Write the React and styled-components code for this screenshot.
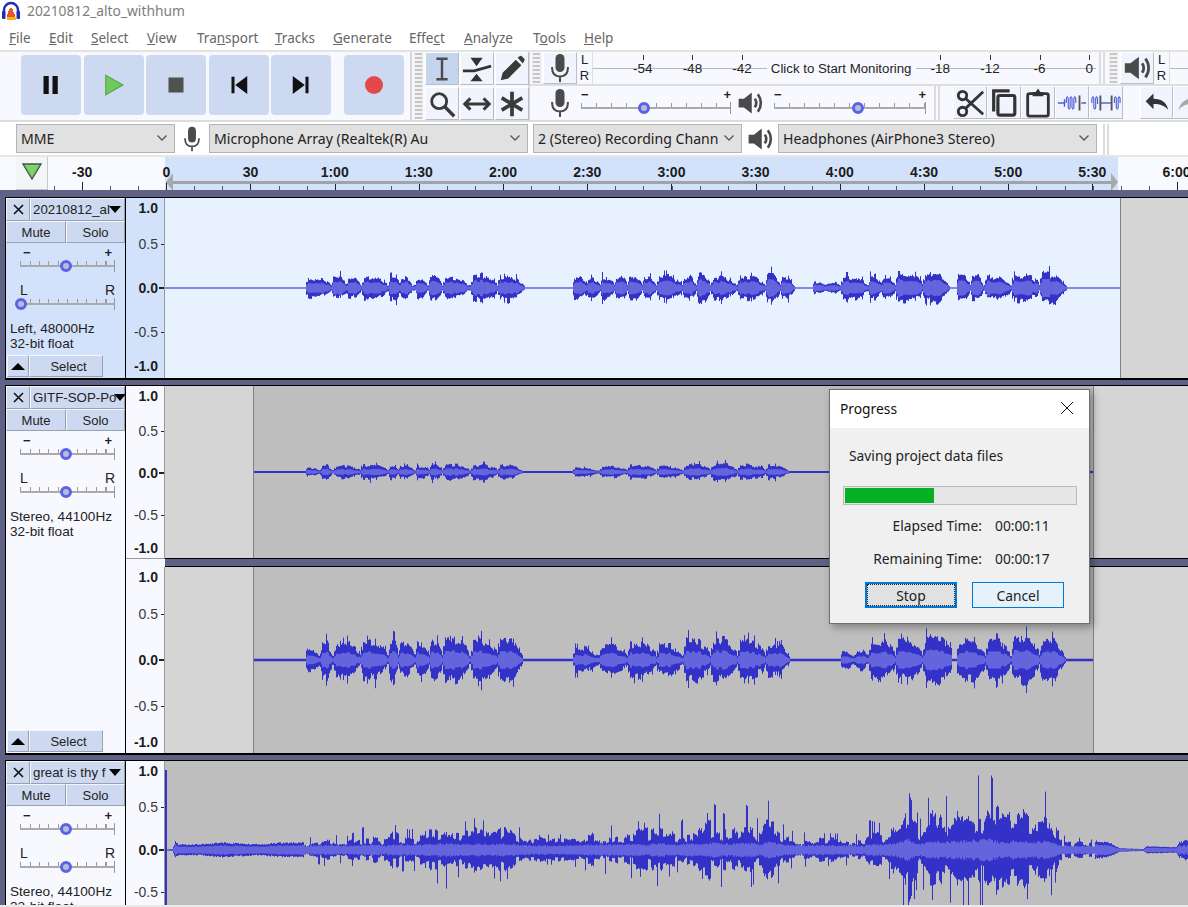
import React from 'react';
import styled, { createGlobalStyle } from 'styled-components';

const UI = '"Noto Sans", "Open Sans", sans-serif';
const ARIAL = '"Liberation Sans", Arial, sans-serif';

const GlobalStyle = createGlobalStyle`
  html, body { margin: 0; padding: 0; background: #fff; }
  * { box-sizing: border-box; }
`;

const Page = styled.div`
  position: relative;
  width: 1188px;
  height: 907px;
  overflow: hidden;
  display: flex;
  flex-direction: column;
  background: #fff;
  font-family: ${ARIAL};
`;

/* title + menu */
const TitleBar = styled.div`
  height: 25px;
  display: flex;
  align-items: center;
  gap: 7px;
  padding: 0 0 4px 2px;
  font: 13.8px ${UI};
  color: #7d7d7d;
`;
const MenuBar = styled.div`
  height: 25px;
  display: flex;
  align-items: center;
  padding-left: 9px;
  font: 13.5px ${UI};
  color: #666;
`;
const MenuItem = styled.span`
  flex: none;
  width: ${(p) => p.$w}px;
`;

/* toolbars */
const Dock = styled.div`
  height: 72px;
  display: flex;
  background: #f8f9fe;
  border-top: 2px solid #e3e3e3;
  border-bottom: 2px solid #dcdcdc;
`;
const Grip = styled.div`
  flex: none;
  width: 9px;
  margin: 1px ${(p) => p.$mr ?? 2}px 1px ${(p) => p.$ml ?? 3}px;
  background: repeating-linear-gradient(0deg, #c6c6c6 0 2px, #f4f4f4 2px 4px);
  border-left: 1px solid #ebebeb;
  border-right: 1px solid #ebebeb;
`;
const TransportBar = styled.div`
  flex: none;
  width: 412px;
  display: flex;
  align-items: center;
  padding-bottom: 2px;
  border-right: 2px solid #d6d6d6;
`;
const TransportBtn = styled.div`
  flex: none;
  width: 60px;
  height: 60px;
  margin-left: ${(p) => p.$ml ?? 2.6}px;
  background: #cdd9f0;
  border-radius: 4px;
  display: flex;
  align-items: center;
  justify-content: center;
`;
const ToolsBar = styled.div`
  flex: none;
  width: 118px;
  display: flex;
  border-right: 2px solid #d6d6d6;
`;
const ToolGrid = styled.div`
  display: grid;
  grid-template-columns: repeat(3, 34px);
  grid-auto-rows: 34px;
  margin-left: 1px;
  gap: 1px 1px;
`;
const ToolBtn = styled.div`
  flex: none;
  width: ${(p) => p.$w ?? 34}px;
  height: ${(p) => p.$h ?? 33}px;
  background: ${(p) => (p.$on ? '#c6d5ee' : '#f1f4fc')};
  border-right: 1px solid #b9bdc9;
  border-bottom: 1px solid #b9bdc9;
  border-top: 1px solid #fff;
  border-left: 1px solid #fff;
  display: flex;
  align-items: center;
  justify-content: center;
`;
const RightStack = styled.div`
  flex: 1;
  min-width: 0;
  display: flex;
  flex-direction: column;
`;
const MeterRow = styled.div`
  height: 34px;
  display: flex;
  border-bottom: 2px solid #dedede;
`;
const MixRow = styled.div`
  flex: 1;
  display: flex;
  align-items: flex-start;
`;
const LR = styled.div`
  flex: none;
  width: 13px;
  margin-left: 1px;
  display: flex;
  flex-direction: column;
  justify-content: space-around;
  align-items: center;
  font: 13px ${ARIAL};
  line-height: 16px;
  color: #222;
`;
const Meter = styled.div`
  flex: none;
  width: 504px;
  height: 32px;
  margin-left: 1px;
  padding-left: 25px;
  display: grid;
  grid-template-columns: repeat(10, 49.6px);
  align-items: center;
  background: linear-gradient(#b8b8b8, #b8b8b8) 0 16px / 100% 1px no-repeat;
  border-left: 1px solid #dedede;
  font: 13.5px ${ARIAL};
  color: #222;
`;
const MeterCell = styled.div`
  position: relative;
  height: 100%;
  display: flex;
  align-items: center;
  justify-content: center;
  white-space: nowrap;
  padding-top: 1px;
  &::before {
    content: '';
    position: absolute;
    left: 50%;
    top: 3px;
    width: 1px;
    height: 5px;
    background: #333;
  }
`;
const MonitorHint = styled.div`
  grid-column: span 3;
  position: relative;
  height: 100%;
  display: flex;
  align-items: center;
  justify-content: center;
  white-space: nowrap;
  font-size: 13.25px;
  padding-top: 1px;
  &::before {
    content: '';
    position: absolute;
    inset: 9px 0 7px;
    background: #f8f9fe;
    z-index: 0;
  }
  & > span { position: relative; }
`;
const DoubleRule = styled.div`
  flex: none;
  width: 6px;
  margin: ${(p) => p.$m ?? '0 3px'};
  align-self: stretch;
  border-left: 2px solid #dcdcdc;
  border-right: 2px solid #dcdcdc;
`;
const MeterStub = styled.div`
  flex: 1;
  margin-left: 1px;
  background: linear-gradient(#b8b8b8, #b8b8b8) 0 16px / 100% 1px no-repeat;
  border-left: 1px solid #dedede;
`;
const IconSlot = styled.div`
  flex: none;
  width: ${(p) => p.$w}px;
  height: ${(p) => p.$h ?? 33}px;
  margin-left: ${(p) => p.$ml ?? 0}px;
  display: flex;
  align-items: center;
  justify-content: center;
`;

/* sliders, both toolbar and track panel */
const SliderBlock = styled.div`
  flex: none;
  width: ${(p) => p.$w}px;
  margin: ${(p) => p.$m};
`;
const SliderEnds = styled.div`
  height: 15px;
  display: flex;
  justify-content: space-between;
  align-items: center;
  padding: 0 ${(p) => p.$pad ?? 2}px 1px;
  font: ${(p) => (p.$big ? '14px' : '13px')} ${ARIAL};
  font-weight: ${(p) => (p.$big ? 400 : 700)};
  color: #222;
`;
const Rail = styled.div`
  position: relative;
  height: 12px;
  background:
    linear-gradient(#aaa, #aaa) 0 5px / 100% 2px no-repeat,
    repeating-linear-gradient(90deg, #9a9a9a 0 1px, transparent 1px ${(p) => p.$step}px) 0 1px / 100% 4px no-repeat;
  border-right: 1px solid #999;
`;
const Thumb = styled.div`
  position: absolute;
  top: 0;
  left: ${(p) => p.$at}px;
  width: 12px;
  height: 12px;
  margin-left: -6px;
  border-radius: 50%;
  background: #b8bcd6;
  border: 3px solid #5a62e6;
`;

/* device row */
const DeviceRow = styled.div`
  height: 35px;
  flex: none;
  display: flex;
  align-items: flex-start;
  padding-top: 2px;
  background: #fff;
  border-bottom: 2px solid #e6e6e6;
`;
const DeviceSelect = styled.div`
  flex: none;
  width: ${(p) => p.$w}px;
  height: 29px;
  margin-left: ${(p) => p.$ml ?? 0}px;
  display: flex;
  align-items: center;
  justify-content: space-between;
  padding: 0 6px 1px 4px;
  background: #e1e1e1;
  border: 1px solid #b4b4b4;
  font: 14.1px ${UI};
  color: #222;
  white-space: nowrap;
  overflow: hidden;
`;

/* timeline */
const TimelineRow = styled.div`
  height: 33px;
  flex: none;
  display: flex;
  padding-left: 16px;
  background: #f9faff;
`;
const PinBtn = styled.div`
  flex: none;
  width: 32px;
  display: flex;
  align-items: center;
  justify-content: center;
  padding-bottom: 4px;
  background: #f4f5fb;
  border-right: 1px solid #c8c8c8;
  border-bottom: 1px solid #c8c8c8;
`;
const Rule = styled.div`
  position: relative;
  flex: 1;
  overflow: hidden;
  background:
    repeating-linear-gradient(90deg, #222 0 1px, transparent 1px 84.2px) 33.8px 100% / 100% 8px no-repeat,
    repeating-linear-gradient(90deg, #555 0 1px, transparent 1px 28.07px) 5.7px 100% / 100% 4px no-repeat,
    linear-gradient(#d3e2fb, #d3e2fb) 117px 0 / 953px 100% no-repeat;
`;
const RuleLabels = styled.div`
  display: grid;
  grid-template-columns: repeat(14, 84.2px);
  margin-left: -8px;
  padding-top: 7px;
  font: 700 14px ${ARIAL};
  color: #1c1c1c;
  text-align: center;
`;
const PlayRegion = styled.div`
  position: absolute;
  left: 122px;
  top: 24px;
  width: 942px;
  height: 3px;
  background: #a3a3a3;
`;
const RegionEnd = styled.div`
  position: absolute;
  top: 16px;
  left: ${(p) => p.$x}px;
  width: 0;
  height: 0;
  border-top: 9px solid transparent;
  border-bottom: 9px solid transparent;
  ${(p) => (p.$flip ? 'border-left: 7px solid #a9a9a9;' : 'border-right: 7px solid #a9a9a9;')}
`;

/* tracks */
const TrackArea = styled.div`
  flex: 1;
  min-height: 0;
  padding: 7px 0 0 5px;
  background: #5f6285;
  overflow: hidden;
`;
const Track = styled.div`
  height: ${(p) => p.$h + 3}px;
  flex: none;
  display: flex;
  margin-bottom: 5px;
  background: #000;
  border-top: 1px solid #000;
  border-bottom: 2px solid #000;
  border-left: 1px solid #000;
  overflow: hidden;
`;
const Panel = styled.div`
  flex: none;
  width: 120px;
  display: flex;
  flex-direction: column;
  background: ${(p) => (p.$sel ? '#d3e2fb' : '#f8f9ff')};
  border-right: 1px solid #000;
`;
const PanelRow = styled.div`
  flex: none;
  display: flex;
  height: ${(p) => p.$h}px;
`;
const PanelBtn = styled.div`
  flex: ${(p) => (p.$w ? 'none' : 1)};
  width: ${(p) => (p.$w ? `${p.$w}px` : 'auto')};
  padding-left: ${(p) => p.$pl ?? 0}px;
  display: flex;
  align-items: center;
  justify-content: center;
  min-width: 0;
  background: #cdd9f0;
  border-top: 1px solid #f4f6fb;
  border-left: 1px solid #f4f6fb;
  border-right: 1px solid #9aa0ad;
  border-bottom: 1px solid #9aa0ad;
  font: 13px ${ARIAL};
  color: #222;
`;
const NameBtn = styled(PanelBtn)`
  justify-content: space-between;
  padding: 0 3px 0 2px;
  white-space: nowrap;
  font-size: 13.3px;
`;
const NameText = styled.span`
  display: block;
`;
const DownArrow = styled.span`
  flex: none;
  width: 0;
  height: 0;
  margin-left: -2px;
  border-left: 6px solid transparent;
  border-right: 6px solid transparent;
  border-top: 7px solid #000;
`;
const UpArrow = styled.span`
  width: 0;
  height: 0;
  border-left: 7px solid transparent;
  border-right: 7px solid transparent;
  border-bottom: 7px solid #000;
`;
const Info = styled.div`
  flex: none;
  margin: 11px 0 0 4px;
  font: 13.6px/15px ${ARIAL};
  color: #222;
`;
const PanelFoot = styled.div`
  margin-top: auto;
  margin-bottom: 1px;
  flex: none;
  height: 22px;
  display: flex;
  padding-left: 1px;
`;
const ChannelStack = styled.div`
  flex: 1;
  min-width: 0;
  display: flex;
  flex-direction: column;
`;
const Channel = styled.div`
  flex: 1 1 auto;
  min-width: 0;
  height: ${(p) => p.$h}px;
  display: flex;
`;
const Scale = styled.div`
  flex: none;
  width: 39px;
  height: 100%;
  overflow: hidden;
  background: ${(p) => (p.$sel ? '#d3e2fb' : '#f8f9ff')};
  border-right: 1px solid #999;
`;
const ScaleRow = styled.div`
  flex: none;
  height: ${(p) => p.$h}px;
  display: flex;
  align-items: center;
  justify-content: flex-end;
  gap: 3px;
  padding-right: ${(p) => (p.$tick ? 0 : 6)}px;
  font: ${(p) => (p.$bold ? 700 : 400)} 14px ${ARIAL};
  color: ${(p) => (p.$bold ? '#1c1c1c' : '#3a3a3a')};
`;
const Tick = styled.span`
  width: ${(p) => (p.$zero ? 5 : 3)}px;
  margin-left: ${(p) => (p.$zero ? -2 : 0)}px;
  height: ${(p) => (p.$zero ? 2 : 1)}px;
  background: #222;
`;
const ChannelGap = styled.div`
  flex: none;
  height: 9px;
  display: flex;
`;
const GapScale = styled.div`
  flex: none;
  width: 39px;
  background: #f8f9ff;
  border-top: 1px solid #999;
`;
const GapBand = styled.div`
  flex: 1;
  background: #5f6285;
  border-top: 1px solid #000;
  border-bottom: 1px solid #000;
`;
const WaveArea = styled.div`
  flex: 1;
  min-width: 0;
  display: flex;
  background: #d5d5d5;
`;
const Clip = styled.div`
  flex: none;
  width: ${(p) => p.$w}px;
  margin-left: ${(p) => p.$ml ?? 0}px;
  background: ${(p) => (p.$sel ? '#e8f1fe' : '#bebebe')};
  ${(p) => p.$edge && 'box-shadow: -1px 0 0 #808080, 1px 0 0 #808080;'}
  ${(p) => p.$right && 'box-shadow: 1px 0 0 #808080;'}
  & > svg { display: block; }
`;
const FootStrip = styled.div`
  position: absolute;
  left: 0;
  right: 0;
  bottom: 0;
  height: 2px;
  background: #e9e9e9;
`;

/* progress dialog */
const Dialog = styled.div`
  position: absolute;
  left: 829px;
  top: 389px;
  width: 261px;
  height: 235px;
  display: flex;
  flex-direction: column;
  background: #f0f0f0;
  border: 1px solid #6f6f6f;
  box-shadow: 3px 3px 8px rgba(0, 0, 0, 0.35);
  font: 13.8px ${UI};
  color: #222;
`;
const DialogTitle = styled.div`
  flex: none;
  height: 38px;
  display: flex;
  align-items: center;
  justify-content: space-between;
  padding: 0 15px 2px 10px;
  background: #fff;
  font-size: 13.8px;
  color: #111;
`;
const DialogMessage = styled.div`
  margin: 18px 0 0 19px;
  line-height: 20px;
  height: 20px;
`;
const BarTrack = styled.div`
  height: 19px;
  margin: 20px 12px 0 13px;
  padding: 1px;
  background: #e6e6e6;
  border: 1px solid #bcbcbc;
`;
const BarFill = styled.div`
  height: 100%;
  background: #06b025;
`;
const TimeGrid = styled.div`
  display: grid;
  grid-template-columns: 152px 1fr;
  column-gap: 13px;
  grid-auto-rows: 33px;
  align-items: center;
  margin-top: 4px;
`;
const TimeLabel = styled.div`
  text-align: right;
`;
const ButtonRow = styled.div`
  display: flex;
  gap: 15px;
  margin: 7px 0 0 35px;
`;
const DialogBtn = styled.div`
  position: relative;
  width: 92px;
  height: 26px;
  display: flex;
  align-items: center;
  justify-content: center;
  background: ${(p) => (p.$focus ? '#e1e1e1' : '#e5f1fb')};
  border: ${(p) => (p.$focus ? '2px solid #0078d7' : '1px solid #0078d7')};
  outline: ${(p) => (p.$focus ? '1px dotted #222' : 'none')};
  outline-offset: -3px;
`;

/* icons */
const Ic = ({ size = 24, vb = 32, children }) => (
  <svg width={size} height={size} viewBox={`0 0 ${vb} ${vb}`} fill="none">{children}</svg>
);
const Logo = () => (
  <svg width="18" height="20" viewBox="0 0 18 20">
    <path d="M2 13V9a7 7 0 0 1 14 0v4" fill="none" stroke="#1b2fb8" strokeWidth="2.4" />
    <rect x="0" y="10" width="3.5" height="8" rx="1" fill="#1b2fb8" />
    <rect x="14.5" y="10" width="3.5" height="8" rx="1" fill="#1b2fb8" />
    <path d="M4 16h1V13h1v-3h1v-2h1v-1h2v1h1v3h1v2h1v3H4z" fill="#e8552a" />
    <path d="M5 19h9v-3H5z" fill="#f3b21f" />
  </svg>
);
const Mic = ({ c = '#4a4a4a', size = 32 }) => (
  <Ic size={size}>
    <rect x="11.5" y="2" width="9" height="18" rx="4.5" fill={c} />
    <path d="M8 15c0 6 3 9.5 8 9.5s8-3.5 8-9.5M16 24v6" stroke={c} strokeWidth="2" />
  </Ic>
);
const Speaker = ({ size = 30 }) => (
  <Ic size={size}>
    <path d="M3 11h6l9-7v24l-9-7H3z" fill="#4a4a4a" />
    <path d="M21.500 11c2 3 2 7 0 10M25 6c4.500 6 4.500 14 0 20" stroke="#4a4a4a" strokeWidth="3" />
  </Ic>
);
const Chevron = () => (
  <svg width="12" height="8" viewBox="0 0 12 8" fill="none">
    <path d="M1.500 1.500L6 6l4.500-4.500" stroke="#555" strokeWidth="1.300" />
  </svg>
);

const tools = [
  <path key="i" d="M10 5h12M10 27h12M16 5v22" stroke="#4c4c4c" strokeWidth="2.600" />,
  <g key="e">
    <path d="M1 18h12l18-5" stroke="#333" strokeWidth="3" />
    <path d="M9 4h13l-6.500 9zM9 29h13l-6.500-8z" fill="#333" />
  </g>,
  <path key="p" d="M4 28l2-8L20 6l6 6-14 14zM22 4l2-1.500a2 2 0 0 1 2.500 0l2.500 2.500a2 2 0 0 1 0 2.500L27.500 10z" fill="#3a3a3a" />,
  <g key="z" stroke="#3a3a3a">
    <circle cx="13" cy="13" r="8" strokeWidth="3" />
    <path d="M19 19l10 10" strokeWidth="3.600" />
  </g>,
  <path key="t" d="M3 16h26M9 10l-6 6 6 6M23 10l6 6-6 6" stroke="#3a3a3a" strokeWidth="3.200" />,
  <path key="m" d="M16 3v26M5 9.500l22 13M5 22.500l22-13" stroke="#3a3a3a" strokeWidth="4" />,
];
const editIcons = [
  <g key="c" stroke="#333" strokeWidth="3">
    <circle cx="8" cy="8" r="4.500" />
    <circle cx="8" cy="25" r="4.500" />
    <path d="M11 11l19 17M11 22L30 4" />
  </g>,
  <g key="k" stroke="#333" strokeWidth="3.400">
    <path d="M5 25V3h17" />
    <rect x="9.500" y="8" width="18" height="21" rx="2" />
  </g>,
  <g key="v" stroke="#333" strokeWidth="3">
    <rect x="5" y="6" width="22" height="24" rx="2" />
    <path d="M11 8V5h3l2-3 2 3h3v3z" fill="#333" strokeWidth="1.500" />
  </g>,
  <g key="tr" fill="none">
    <path d="M1 16h7M26 16h5M8 12v8" stroke="#4d5cd6" strokeWidth="1.500" />
    <path d="M10 16v-5q1-3 2 0v10q1 3 2 0V11q1-3 2 0v10q1 3 2 0V11q1-3 2 0v5" stroke="#4d5cd6" strokeWidth="1.200" />
    <path d="M24 8v16" stroke="#555" strokeWidth="2" />
  </g>,
  <g key="s" fill="none">
    <path d="M1 16v-5q1-3 2 0v10q1 3 2 0V11q1-3 2 0v6M25 16v-5q1-3 2 0v10q1 3 2 0V11q1-3 2 0v5" stroke="#4d5cd6" strokeWidth="1.200" />
    <path d="M10 16h12" stroke="#4d5cd6" strokeWidth="1.500" />
    <path d="M10 8v16M22 8v16" stroke="#555" strokeWidth="2" />
  </g>,
];

/* wave drawing */
const rng = (seed) => {
  let s = seed;
  return () => {
    s = (s * 16807) % 2147483647;
    return s / 2147483647;
  };
};
const noteEnv = (notes, x) => {
  const i = notes.findIndex((m) => x >= m[0] && x < m[1]);
  if (i < 0) {
    // short gaps inside a phrase keep a little body
    const prev = notes.filter((m) => m[1] <= x).pop();
    const next = notes.find((m) => m[0] > x);
    return prev && next && next[0] - prev[1] < 5 ? 0.25 : 0;
  }
  const n = notes[i];
  const t = (x - n[0]) / (n[1] - n[0]);
  const next = notes[i + 1];
  const last = !next || next[0] - n[1] > 6;
  if (t < 0.05) return n[2] * 0.62;
  if (t < 0.55) return n[2];
  const fall = (t - 0.55) / 0.45;
  return n[2] * (1 - fall * (last ? 0.9 : 0.6));
};
const lerpEnv = (keys, x) => {
  for (let i = 1; i < keys.length; i++) {
    if (x <= keys[i][0]) {
      const [a, va] = keys[i - 1];
      const [b, vb] = keys[i];
      return va + ((vb - va) * (x - a)) / (b - a || 1);
    }
  }
  return keys[keys.length - 1][1];
};

const soloNotes = [
  [306, 330, 0.85], [332, 347, 0.9], [347, 361, 0.85], [362, 387, 1], [389, 400, 1.05], [400, 412, 0.95],
  [416, 427, 0.9], [429, 442, 1], [443, 467, 0.95], [471, 497, 1.15], [498, 525, 1],
  [573, 587, 0.95], [587, 600, 0.8], [601, 614, 0.95], [615, 627, 1.05], [628, 642, 0.95], [643, 656, 0.9],
  [657, 682, 1], [683, 696, 0.95], [697, 710, 1.2], [711, 736, 0.95], [738, 765, 1], [766, 780, 1.2], [781, 795, 0.9],
  [813, 826, 0.5], [827, 840, 0.45], [841, 867, 0.95], [869, 882, 0.9], [882, 895, 0.85], [896, 922, 1.35],
  [923, 950, 1.25], [957, 970, 1.05], [971, 983, 1.05], [985, 1010, 1.05], [1012, 1039, 1.2], [1040, 1067, 1.25],
];
const choirNotes = [
  [306, 320, 0.55], [321, 332, 0.9], [334, 360, 0.85], [361, 387, 0.95], [389, 398, 1], [399, 414, 0.8],
  [416, 429, 0.85], [430, 442, 0.95], [443, 469, 1.1], [471, 497, 1], [498, 523, 1],
  [573, 597, 0.6], [600, 627, 0.75], [628, 656, 0.9], [657, 682, 0.75], [684, 710, 1], [711, 737, 1.1],
  [738, 765, 0.95], [766, 790, 0.85],
  [841, 854, 0.45], [856, 867, 0.55], [869, 895, 1], [896, 922, 1], [923, 952, 1.15], [957, 985, 1],
  [986, 1010, 1.05], [1012, 1039, 1.2], [1040, 1066, 1],
];
const hymnKeys = [
  [165, 0], [172, 1], [175, 9], [178, 6], [200, 6], [222, 8], [240, 7], [260, 6], [280, 8], [300, 8], [308, 12], [325, 17],
  [345, 13], [365, 24], [385, 15], [392, 26], [410, 20], [432, 32], [448, 42], [460, 26], [472, 32], [490, 28], [502, 34], [520, 22],
  [532, 15], [570, 16], [598, 26], [615, 24], [632, 30], [650, 26], [657, 38], [676, 22], [683, 32], [700, 28], [714, 46], [730, 30],
  [742, 50], [760, 28], [769, 52], [786, 20], [809, 17], [856, 16], [864, 10], [868, 30], [883, 26], [896, 36], [908, 80], [919, 28],
  [926, 52], [948, 54], [956, 60], [969, 68], [988, 82], [996, 62], [1006, 46], [1014, 68], [1030, 48], [1043, 62], [1053, 44],
  [1059, 15], [1109, 8], [1119, 2], [1143, 1], [1146, 4], [1176, 3], [1184, 18], [1188, 14],
];

const notePaths = (notes, from, w, cy, peakAmp, rmsAmp, seed) => {
  const r = rng(seed);
  let peak = '';
  let rms = '';
  let blockA = r();
  let blockB = r();
  for (let px = 0; px < w; px++) {
    if (px % 3 === 0) {
      blockA = r();
      blockB = r();
    }
    const e = noteEnv(notes, px + from);
    const hit = r();
    const lift = hit > 0.92 ? 1.35 : 1;
    const a = r();
    const b = r();
    if (e <= 0) continue;
    const up = e * peakAmp * (0.55 + 0.38 * blockA + 0.12 * a) * lift;
    const dn = e * peakAmp * (0.55 + 0.38 * blockB + 0.12 * b) * lift;
    const m = Math.min(up, e * rmsAmp * (0.7 + 0.35 * blockA));
    peak += `M${px + 0.5} ${(cy - up).toFixed(1)}V${(cy + dn).toFixed(1)}`;
    rms += `M${px + 0.5} ${(cy - m).toFixed(1)}V${(cy + m).toFixed(1)}`;
  }
  return { peak, rms };
};
const hymnPaths = (w, cy) => {
  const r = rng(2021);
  let peak = `M0.5 9V${cy + 60}M1.5 9V${cy + 60}`;
  let rms = '';
  let block = r();
  let gust = r();
  for (let px = 2; px < w; px++) {
    if (px % 3 === 0) block = r();
    if (px % 13 === 0) gust = 0.62 + 0.42 * r();
    const e = lerpEnv(hymnKeys, px + 165);
    const spike = () => {
      const v = r();
      if (e < 10) return 0.78 + v * 0.22;
      return v > 0.93 ? 1 : (0.3 + 0.45 * block + 0.1 * v) * gust;
    };
    const up = e * spike();
    const dn = e * spike() * 0.95;
    const m = e < 10 ? up * 0.62 : Math.min((3 + e * 0.09) * (0.8 + 0.35 * r()), up);
    peak += `M${px + 0.5} ${(cy - up).toFixed(1)}V${(cy + dn).toFixed(1)}`;
    rms += `M${px + 0.5} ${(cy - m).toFixed(1)}V${(cy + m).toFixed(1)}`;
  }
  return { peak, rms };
};

const Wave = ({ w, h, cy, paths, lineColor = '#6464dc', lineWidth = 1.5 }) => (
  <svg width={w} height={h} viewBox={`0 0 ${w} ${h}`}>
    <path d={`M0 ${cy}H${w}`} stroke={lineColor} strokeWidth={lineWidth} fill="none" />
    <path d={paths.peak} stroke="#3232c8" strokeWidth="1" fill="none" />
    <path d={paths.rms} stroke="#6464dc" strokeWidth="1" fill="none" />
  </svg>
);

const waveSolo = notePaths(soloNotes, 165, 955, 90, 13.5, 7, 11);
const waveTop = notePaths(choirNotes, 254, 839, 86, 8.5, 3.5, 23);
const waveLow = notePaths(choirNotes, 254, 839, 93, 23, 9, 37);
const waveHymn = hymnPaths(1023, 89);

/* shared bits */
const LABELS = ['1.0', '0.5', '0.0', '-0.5', '-1.0'];
const VScale = ({ rows, sel }) => (
  <Scale $sel={sel}>
    {rows.map((h, i) => (
      <ScaleRow key={LABELS[i]} $h={h} $bold={i % 2 === 0} $tick={i > 0 && i < 4}>
        {LABELS[i]}
        {i > 0 && i < 4 && <Tick $zero={i === 2} />}
      </ScaleRow>
    ))}
  </Scale>
);

const TrackPanel = ({ name, info, sel, panAt, foot }) => (
  <Panel $sel={sel}>
    <PanelRow $h={23}>
      <PanelBtn $w={24}>
        <svg width="11" height="11" viewBox="0 0 11 11">
          <path d="M1 1l9 9M10 1l-9 9" stroke="#111" strokeWidth="1.600" />
        </svg>
      </PanelBtn>
      <NameBtn>
        <NameText>{name}</NameText>
        <DownArrow />
      </NameBtn>
    </PanelRow>
    <PanelRow $h={22}>
      <PanelBtn $w={60}>Mute</PanelBtn>
      <PanelBtn>Solo</PanelBtn>
    </PanelRow>
    <SliderBlock $w={95} $m="2px 0 0 14px">
      <SliderEnds $pad={3}>
        <span>−</span>
        <span>+</span>
      </SliderEnds>
      <Rail $step={9.5}>
        <Thumb $at={46} />
      </Rail>
    </SliderBlock>
    <SliderBlock $w={95} $m="11px 0 0 14px">
      <SliderEnds $big $pad={0}>
        <span>L</span>
        <span>R</span>
      </SliderEnds>
      <Rail $step={9.5}>
        <Thumb $at={panAt} />
      </Rail>
    </SliderBlock>
    <Info>
      {info}
      <br />
      32-bit float
    </Info>
    {foot && (
      <PanelFoot>
        <PanelBtn $w={22}>
          <UpArrow />
        </PanelBtn>
        <PanelBtn $w={74} $pl={5}>Select</PanelBtn>
      </PanelFoot>
    )}
  </Panel>
);

const menu = [
  ['', 'F', 'ile', 40], ['', 'E', 'dit', 42], ['', 'S', 'elect', 56], ['', 'V', 'iew', 50], ['Tra', 'n', 'sport', 78],
  ['', 'T', 'racks', 58], ['', 'G', 'enerate', 76], ['Effe', 'c', 't', 55], ['', 'A', 'nalyze', 69], ['T', 'o', 'ols', 51], ['', 'H', 'elp', 40],
];
const dbLeft = ['-54', '-48', '-42'];
const dbRight = ['-18', '-12', '-6', '0'];
const rulerLabels = ['-30', '0', '30', '1:00', '1:30', '2:00', '2:30', '3:00', '3:30', '4:00', '4:30', '5:00', '5:30', '6:00'];

export default function App() {
  return (
    <Page>
      <GlobalStyle />
      <TitleBar>
        <Logo />
        20210812_alto_withhum
      </TitleBar>
      <MenuBar>
        {menu.map(([a, u, b, w]) => (
          <MenuItem key={u + b} $w={w}>
            {a}
            <u>{u}</u>
            {b}
          </MenuItem>
        ))}
      </MenuBar>

      <Dock>
        <TransportBar>
          <Grip />
          <TransportBtn $ml={7}>
            <Ic>
              <path d="M6 4h7v24H6zM18 4h7v24h-7z" fill="#111" />
            </Ic>
          </TransportBtn>
          <TransportBtn>
            <Ic>
              <path d="M5 3l23 13L5 29z" fill="#6fca5e" stroke="#55a848" strokeWidth="1.500" />
            </Ic>
          </TransportBtn>
          <TransportBtn>
            <Ic>
              <rect x="6" y="6" width="20" height="20" fill="#505050" />
            </Ic>
          </TransportBtn>
          <TransportBtn>
            <Ic>
              <path d="M6 5h4v22H6zM27 4v24L11 16z" fill="#111" />
            </Ic>
          </TransportBtn>
          <TransportBtn>
            <Ic>
              <path d="M5 4v24l16-12zM22 5h4v22h-4z" fill="#111" />
            </Ic>
          </TransportBtn>
          <TransportBtn $ml={12.6}>
            <Ic>
              <circle cx="16" cy="16" r="12" fill="#e24a4a" />
            </Ic>
          </TransportBtn>
        </TransportBar>

        <ToolsBar>
          <Grip $mr={1} $ml={2} />
          <ToolGrid>
            {tools.map((t, i) => (
              <ToolBtn key={i} $on={i === 0}>
                <Ic size={30}>{t}</Ic>
              </ToolBtn>
            ))}
          </ToolGrid>
        </ToolsBar>

        <RightStack>
          <MeterRow>
            <Grip $ml={2} />
            <ToolBtn $h={32}>
              <Mic />
            </ToolBtn>
            <LR>
              <span>L</span>
              <span>R</span>
            </LR>
            <Meter>
              {dbLeft.map((d) => (
                <MeterCell key={d}>{d}</MeterCell>
              ))}
              <MonitorHint>
                <span>Click to Start Monitoring</span>
              </MonitorHint>
              {dbRight.map((d) => (
                <MeterCell key={d}>{d}</MeterCell>
              ))}
            </Meter>
            <DoubleRule />
            <Grip $ml={1} />
            <ToolBtn $h={32}>
              <Speaker />
            </ToolBtn>
            <LR>
              <span>L</span>
              <span>R</span>
            </LR>
            <MeterStub />
          </MeterRow>
          <MixRow>
            <Grip $ml={2} />
            <IconSlot $w={34}>
              <Mic />
            </IconSlot>
            <SliderBlock $w={150} $m="1px 0 0 4px">
              <SliderEnds $pad={0}>
                <span>−</span>
                <span>+</span>
              </SliderEnds>
              <Rail $step={15}>
                <Thumb $at={63} />
              </Rail>
            </SliderBlock>
            <IconSlot $w={28} $ml={5}>
              <Speaker />
            </IconSlot>
            <SliderBlock $w={152} $m="1px 0 0 10px">
              <SliderEnds $pad={0}>
                <span>−</span>
                <span>+</span>
              </SliderEnds>
              <Rail $step={15}>
                <Thumb $at={84} />
              </Rail>
            </SliderBlock>
            <DoubleRule $m="0 1px 0 8px" />
            <Grip $ml={2} $mr={1} />
            {editIcons.map((t, i) => (
              <ToolBtn key={i}>
                <Ic size={30}>{t}</Ic>
              </ToolBtn>
            ))}
            <IconSlot $w={17} />
            <ToolBtn $w={33}>
              <Ic size={28}>
                <path d="M3 14l9-9v6c9 0 15 4 17 13-4-5-9-7-17-7v6z" fill="#333" />
              </Ic>
            </ToolBtn>
            <ToolBtn $w={33}>
              <Ic size={28}>
                <path d="M29 14l-9-9v6C11 11 5 15 3 24c4-5 9-7 17-7v6z" fill="#a8a8a8" />
              </Ic>
            </ToolBtn>
          </MixRow>
        </RightStack>
      </Dock>

      <DeviceRow>
        <Grip $mr={4} />
        <DeviceSelect $w={159}>
          MME
          <Chevron />
        </DeviceSelect>
        <IconSlot $w={34} $h={29}>
          <Mic size={28} />
        </IconSlot>
        <DeviceSelect $w={319}>
          Microphone Array (Realtek(R) Au
          <Chevron />
        </DeviceSelect>
        <DeviceSelect $w={209} $ml={5}>
          2 (Stereo) Recording Chann
          <Chevron />
        </DeviceSelect>
        <IconSlot $w={36} $h={29}>
          <Speaker size={28} />
        </IconSlot>
        <DeviceSelect $w={319}>
          Headphones (AirPhone3 Stereo)
          <Chevron />
        </DeviceSelect>
        <DoubleRule $m="0 0 0 6px" />
      </DeviceRow>

      <TimelineRow>
        <PinBtn>
          <svg width="22" height="19" viewBox="0 0 22 19">
            <path d="M2 2h18L11 17z" fill="#7fd16b" stroke="#3c5c38" strokeWidth="1.400" />
          </svg>
        </PinBtn>
        <Rule>
          <RuleLabels>
            {rulerLabels.map((l) => (
              <div key={l}>{l}</div>
            ))}
          </RuleLabels>
          <PlayRegion />
          <RegionEnd $x={118} />
          <RegionEnd $x={1063} $flip />
        </Rule>
      </TimelineRow>

      <TrackArea>
        <Track $h={180}>
          <TrackPanel name="20210812_al" info="Left, 48000Hz" sel panAt={1} foot />
          <Channel $h={180}>
            <VScale rows={[20, 52, 36, 52, 16]} sel />
            <WaveArea>
              <Clip $w={955} $sel $right>
                <Wave w={955} h={180} cy={90} paths={waveSolo} />
              </Clip>
            </WaveArea>
          </Channel>
        </Track>

        <Track $h={367}>
          <TrackPanel name="GITF-SOP-Po" info="Stereo, 44100Hz" panAt={46} foot />
          <ChannelStack>
            <Channel $h={172}>
              <VScale rows={[20, 50, 34, 50, 16]} />
              <WaveArea>
                <Clip $w={839} $ml={89} $edge>
                  <Wave w={839} h={172} cy={86} paths={waveTop} lineColor="#3232c8" lineWidth={2} />
                </Clip>
              </WaveArea>
            </Channel>
            <ChannelGap>
              <GapScale />
              <GapBand />
            </ChannelGap>
            <Channel $h={186}>
              <VScale rows={[20, 54, 38, 54, 18]} />
              <WaveArea>
                <Clip $w={839} $ml={89} $edge>
                  <Wave w={839} h={186} cy={93} paths={waveLow} lineColor="#3232c8" lineWidth={2.5} />
                </Clip>
              </WaveArea>
            </Channel>
          </ChannelStack>
        </Track>

        <Track $h={146}>
          <TrackPanel name="great is thy f" info="Stereo, 44100Hz" panAt={46} />
          <Channel $h={146}>
            <VScale rows={[20, 52, 34, 50, 20]} />
            <WaveArea>
              <Clip $w={1023}>
                <Wave w={1023} h={146} cy={89} paths={waveHymn} lineWidth={1} />
              </Clip>
            </WaveArea>
          </Channel>
        </Track>
      </TrackArea>
      <FootStrip />

      <Dialog>
        <DialogTitle>
          Progress
          <svg width="14" height="14" viewBox="0 0 14 14">
            <path d="M1 1l12 12M13 1L1 13" stroke="#111" strokeWidth="1" />
          </svg>
        </DialogTitle>
        <DialogMessage>Saving project data files</DialogMessage>
        <BarTrack>
          <BarFill style={{ width: `${(89 / 230) * 100}%` }} />
        </BarTrack>
        <TimeGrid>
          <TimeLabel>Elapsed Time:</TimeLabel>
          <div>00:00:11</div>
          <TimeLabel>Remaining Time:</TimeLabel>
          <div>00:00:17</div>
        </TimeGrid>
        <ButtonRow>
          <DialogBtn $focus>Stop</DialogBtn>
          <DialogBtn>Cancel</DialogBtn>
        </ButtonRow>
      </Dialog>
    </Page>
  );
}
